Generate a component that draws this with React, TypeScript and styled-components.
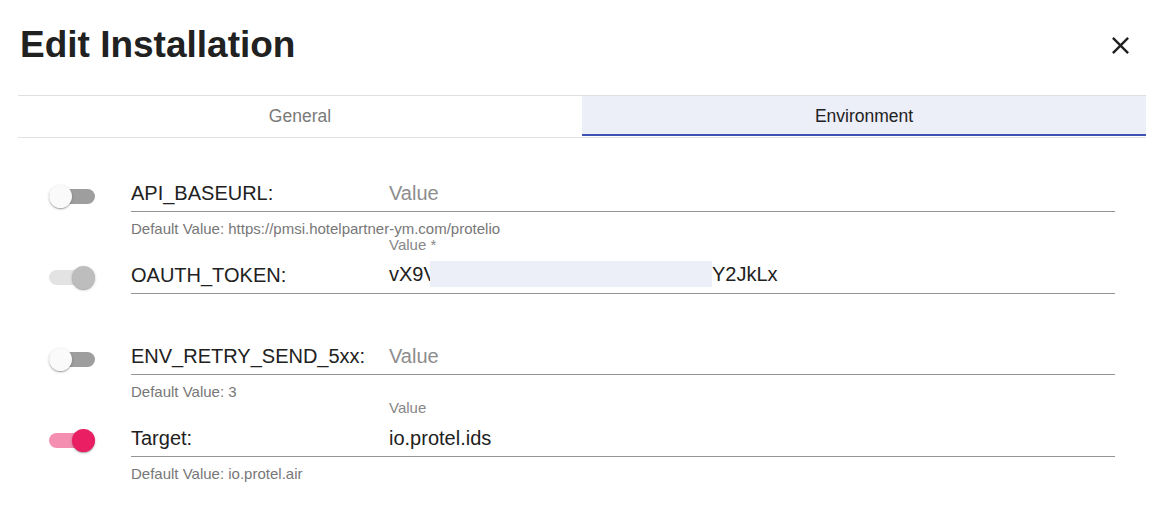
import React from "react";
import styled, { createGlobalStyle } from "styled-components";

const GlobalStyle = createGlobalStyle`
  html, body {
    margin: 0;
    padding: 0;
    background: #ffffff;
    font-family: "Liberation Sans", Arial, Helvetica, sans-serif;
    color: #212121;
  }
  * { box-sizing: border-box; }
`;

const Page = styled.div`
  width: 1155px;
  height: 529px;
  background: #ffffff;
  overflow: hidden;
`;

const Header = styled.header`
  display: flex;
  align-items: center;
  justify-content: space-between;
  padding: 23px 20px 0 20px;
`;

const Title = styled.h1`
  margin: 0;
  font-size: 37px;
  line-height: 44px;
  font-weight: 700;
  color: #212121;
`;

const CloseButton = styled.button`
  display: flex;
  align-items: center;
  justify-content: center;
  width: 30px;
  height: 30px;
  padding: 0;
  margin-top: 0;
  border: none;
  background: transparent;
  color: #212121;
  cursor: pointer;
`;

const TabBar = styled.div`
  display: grid;
  grid-template-columns: 1fr 1fr;
  margin: 28px 9px 0 18px;
  border-top: 1px solid #e0e0e0;
  border-bottom: 1px solid #e0e0e0;
  padding-bottom: 1px;
`;

const Tab = styled.div<{ $active?: boolean }>`
  display: flex;
  align-items: center;
  justify-content: center;
  height: 40px;
  padding-top: 2px;
  font-size: 17.5px;
  color: ${(p) => (p.$active ? "#212121" : "#7a7a7a")};
  background: ${(p) => (p.$active ? "#eceef8" : "transparent")};
  border-bottom: 2px solid ${(p) => (p.$active ? "#3f51b5" : "transparent")};
`;

const Rows = styled.div`
  display: flex;
  flex-direction: column;
  padding: 15px 40px 0 49px;
`;

const Row = styled.div`
  display: grid;
  grid-template-columns: 46px 1fr;
  column-gap: 36px;
  height: 81.67px;
`;

const SwitchCell = styled.div`
  padding-top: 35.5px;
`;

type SwitchState = "off" | "onDisabled" | "on";

const trackColors: Record<SwitchState, string> = {
  off: "#9e9e9e",
  onDisabled: "#e3e3e3",
  on: "#f48fb1",
};

const thumbColors: Record<SwitchState, string> = {
  off: "#fafafa",
  onDisabled: "#bdbdbd",
  on: "#e91e63",
};

const Track = styled.div<{ $state: SwitchState }>`
  display: flex;
  align-items: center;
  justify-content: ${(p) => (p.$state === "off" ? "flex-start" : "flex-end")};
  width: 46px;
  height: 15px;
  border-radius: 8px;
  background: ${(p) => trackColors[p.$state]};
`;

const Thumb = styled.div<{ $state: SwitchState }>`
  flex: none;
  width: 23px;
  height: 23px;
  border-radius: 50%;
  background: ${(p) => thumbColors[p.$state]};
  box-shadow: 0px 1px 3px rgba(0, 0, 0, 0.2), 0px 1px 1px rgba(0, 0, 0, 0.14),
    0px 2px 1px -1px rgba(0, 0, 0, 0.12);
`;

const Field = styled.div`
  display: flex;
  flex-direction: column;
  width: 984px;
`;

const FloatLabel = styled.div`
  height: 20px;
  padding-left: 258px;
  font-size: 15px;
  line-height: 20px;
  color: #878787;
  white-space: nowrap;
`;

const InputLine = styled.div`
  display: flex;
  align-items: flex-end;
  height: 39px;
  padding-bottom: 6px;
  border-bottom: 1px solid #949494;
  font-size: 20px;
  line-height: 24px;
  white-space: nowrap;
`;

const Key = styled.span`
  flex: none;
  width: 258px;
  color: #212121;
`;

const Value = styled.span<{ $placeholder?: boolean }>`
  color: ${(p) => (p.$placeholder ? "#8d8d8d" : "#212121")};
`;

const Redaction = styled.span`
  display: inline-block;
  width: 282px;
  height: 26px;
  margin-left: -6.8px;
  vertical-align: -6px;
  background: #eceef8;
`;

const Helper = styled.div`
  margin-top: 8px;
  font-size: 15px;
  line-height: 18px;
  color: #777777;
  white-space: nowrap;
`;

const Switch = ({ state }: { state: SwitchState }) => (
  <Track $state={state}>
    <Thumb $state={state} />
  </Track>
);

const CloseIcon = () => (
  <svg width="29" height="29" viewBox="0 0 24 24" fill="currentColor" aria-hidden="true">
    <path d="M19 6.41L17.59 5 12 10.59 6.41 5 5 6.41 10.59 12 5 17.59 6.41 19 12 13.41 17.59 19 19 17.59 13.41 12z" />
  </svg>
);

export default function App() {
  return (
    <Page>
      <GlobalStyle />
      <Header>
        <Title>Edit Installation</Title>
        <CloseButton aria-label="Close">
          <CloseIcon />
        </CloseButton>
      </Header>
      <TabBar>
        <Tab>General</Tab>
        <Tab $active>Environment</Tab>
      </TabBar>
      <Rows>
        <Row>
          <SwitchCell>
            <Switch state="off" />
          </SwitchCell>
          <Field>
            <FloatLabel />
            <InputLine>
              <Key>API_BASEURL:</Key>
              <Value $placeholder>Value</Value>
            </InputLine>
            <Helper>Default Value: https://pmsi.hotelpartner-ym.com/protelio</Helper>
          </Field>
        </Row>
        <Row>
          <SwitchCell>
            <Switch state="onDisabled" />
          </SwitchCell>
          <Field>
            <FloatLabel>Value *</FloatLabel>
            <InputLine>
              <Key>OAUTH_TOKEN:</Key>
              <Value>
                vX9V
                <Redaction />
                Y2JkLx
              </Value>
            </InputLine>
          </Field>
        </Row>
        <Row>
          <SwitchCell>
            <Switch state="off" />
          </SwitchCell>
          <Field>
            <FloatLabel />
            <InputLine>
              <Key>ENV_RETRY_SEND_5xx:</Key>
              <Value $placeholder>Value</Value>
            </InputLine>
            <Helper>Default Value: 3</Helper>
          </Field>
        </Row>
        <Row>
          <SwitchCell>
            <Switch state="on" />
          </SwitchCell>
          <Field>
            <FloatLabel>Value</FloatLabel>
            <InputLine>
              <Key>Target:</Key>
              <Value>io.protel.ids</Value>
            </InputLine>
            <Helper>Default Value: io.protel.air</Helper>
          </Field>
        </Row>
      </Rows>
    </Page>
  );
}
